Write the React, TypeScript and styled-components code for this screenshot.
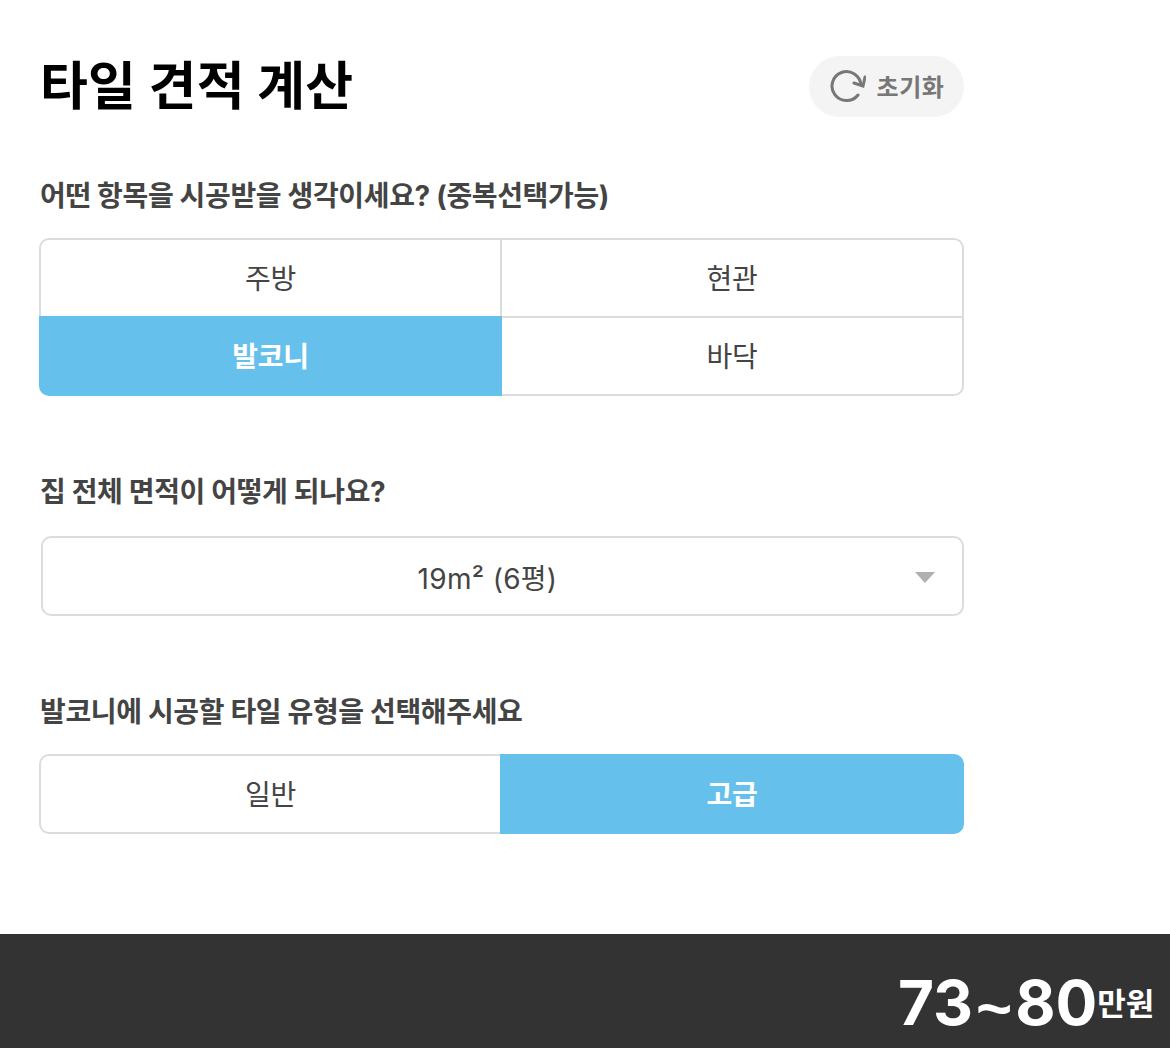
import React, { FC } from 'react';
import styled, { createGlobalStyle } from 'styled-components';

const GlobalStyle = createGlobalStyle`
  html, body {
    margin: 0;
    padding: 0;
    background: #fff;
  }
  body {
    font-family: Inter, "Noto Sans CJK KR", sans-serif;
  }
`;

const Page = styled.div`
  width: 1170px;
  height: 1048px;
  overflow: hidden;
  display: flex;
  flex-direction: column;
`;

const Content = styled.main`
  flex: 1;
  width: 925px;
  padding: 56px 0 0 39px;
`;

const Header = styled.header`
  height: 61px;
  display: flex;
  align-items: center;
  justify-content: space-between;
  margin-bottom: 63px;
`;

const Title = styled.h1`
  margin: 0 0 0 1px;
  font-size: 52px;
  line-height: 60px;
  font-weight: 700;
  letter-spacing: 0.2px;
  color: #000;
`;

const ResetButton = styled.button`
  width: 155px;
  height: 61px;
  border: 0;
  border-radius: 31px;
  background: #f4f4f4;
  display: flex;
  align-items: center;
  justify-content: center;
  gap: 10px;
  padding: 0 0 2px 2px;
  font-family: inherit;
  font-size: 24px;
  font-weight: 700;
  letter-spacing: 0.6px;
  color: #777;
`;

const Section = styled.section<{ $gap: number }>`
  margin-bottom: ${p => p.$gap}px;
`;

const Label = styled.h2`
  margin: 0 0 26px 1px;
  font-size: 28px;
  line-height: 32px;
  font-weight: 700;
  letter-spacing: -0.35px;
  color: #444;
`;

const OptionGrid = styled.div<{ $rows: number }>`
  display: grid;
  grid-template-columns: 463px 462px;
  grid-template-rows: ${p => (p.$rows > 1 ? '80px 78px' : '80px')};
`;

const OptionCell = styled.button<{ $active?: boolean }>`
  position: relative;
  z-index: ${p => (p.$active ? 1 : 0)};
  border: 2px solid ${p => (p.$active ? '#65c1ec' : '#dcdcdc')};
  background: ${p => (p.$active ? '#65c1ec' : '#fff')};
  color: ${p => (p.$active ? '#fff' : '#444')};
  font-family: inherit;
  font-size: 28px;
  font-weight: ${p => (p.$active ? 700 : 400)};
  letter-spacing: -0.3px;
  padding: 0 0 3px;

  &:nth-child(even) {
    margin-left: -2px;
  }
  &:nth-child(n + 3) {
    margin-top: -2px;
  }
  &:first-child {
    border-top-left-radius: 10px;
  }
  &:nth-child(2) {
    border-top-right-radius: 10px;
  }
  &:nth-last-child(2) {
    border-bottom-left-radius: 10px;
  }
  &:last-child {
    border-bottom-right-radius: 10px;
  }
`;

const Select = styled.div`
  position: relative;
  box-sizing: border-box;
  height: 80px;
  margin: 28px 0 0 2px;
  padding: 1px 30px 0 0;
  border: 2px solid #dcdcdc;
  border-radius: 10px;
  display: flex;
  align-items: center;
  justify-content: center;
  font-size: 28px;
  letter-spacing: 0.3px;
  color: #444;
`;

const Caret = styled.span`
  position: absolute;
  right: 27px;
  top: 34px;
  width: 0;
  height: 0;
  border-left: 10.5px solid transparent;
  border-right: 10.5px solid transparent;
  border-top: 11px solid #b0b0b0;
`;

const Footer = styled.footer`
  height: 114px;
  box-sizing: border-box;
  padding: 26px 16px 0 0;
  background: #333;
  display: flex;
  align-items: center;
  justify-content: flex-end;
  color: #fff;
  font-weight: 700;
`;

const Price = styled.span`
  font-size: 62px;
  line-height: 1;
  padding-top: 2px;
`;

const Tilde = styled.span`
  font-family: "Liberation Sans", sans-serif;
  margin: 0 3px;
  vertical-align: -4px;
`;

const Unit = styled.span`
  font-size: 31px;
  letter-spacing: -0.2px;
  padding-bottom: 6px;
`;

const RefreshIcon: FC = () => (
  <svg width="36" height="36" viewBox="0 0 36 36" fill="none" stroke="#777" strokeWidth="3">
    <path d="M28 27A14.5 14.5 0 1 1 31 17" strokeLinecap="round" />
    <path d="M35 9 33 18 24 15" strokeLinejoin="miter" strokeLinecap="round" />
  </svg>
);

interface Option {
  title: string;
  active?: boolean;
}

const AREA_OPTIONS: Option[] = [
  { title: '주방' },
  { title: '현관' },
  { title: '발코니', active: true },
  { title: '바닥' },
];

const GRADE_OPTIONS: Option[] = [{ title: '일반' }, { title: '고급', active: true }];

const Options: FC<{ items: Option[] }> = ({ items }) => (
  <OptionGrid $rows={Math.ceil(items.length / 2)}>
    {items.map(item => (
      <OptionCell key={item.title} $active={item.active}>
        {item.title}
      </OptionCell>
    ))}
  </OptionGrid>
);

export default function App() {
  return (
    <Page>
      <GlobalStyle />
      <Content>
        <Header>
          <Title>타일 견적 계산</Title>
          <ResetButton>
            <RefreshIcon />
            초기화
          </ResetButton>
        </Header>
        <Section $gap={80}>
          <Label>어떤 항목을 시공받을 생각이세요? (중복선택가능)</Label>
          <Options items={AREA_OPTIONS} />
        </Section>
        <Section $gap={80}>
          <Label>집 전체 면적이 어떻게 되나요?</Label>
          <Select>
            19m² (6평)
            <Caret />
          </Select>
        </Section>
        <Section $gap={0}>
          <Label>발코니에 시공할 타일 유형을 선택해주세요</Label>
          <Options items={GRADE_OPTIONS} />
        </Section>
      </Content>
      <Footer>
        <Price>
          73<Tilde>~</Tilde>80
        </Price>
        <Unit>만원</Unit>
      </Footer>
    </Page>
  );
}
